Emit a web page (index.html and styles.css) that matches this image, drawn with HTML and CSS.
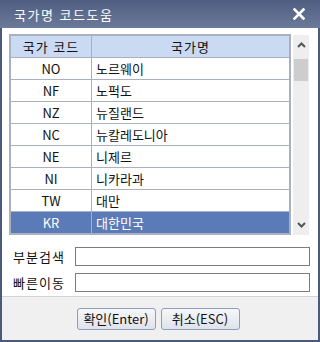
FILE: index.html
```html
<!DOCTYPE html>
<html lang="ko">
<head>
    <meta charset="UTF-8">
    <title>국가명 코드도움</title>
    <link rel="stylesheet" href="styles.css">
</head>
<body>
    <div class="dialog">
        <div class="titlebar">
            <span class="title">국가명 코드도움</span>
            <svg class="close" width="12" height="12" viewBox="0 0 12 12">
                <path d="M1.5 1.5 L10.5 10.5 M10.5 1.5 L1.5 10.5" stroke="#fff" stroke-width="2.6" stroke-linecap="square"/>
            </svg>
        </div>

        <div class="content">
            <div class="list">
                <table>
                    <tr>
                        <th class="col-code">국가 코드</th>
                        <th>국가명</th>
                    </tr>
                    <tr><td class="col-code">NO</td><td>노르웨이</td></tr>
                    <tr><td class="col-code">NF</td><td>노퍽도</td></tr>
                    <tr><td class="col-code">NZ</td><td>뉴질랜드</td></tr>
                    <tr><td class="col-code">NC</td><td>뉴칼레도니아</td></tr>
                    <tr><td class="col-code">NE</td><td>니제르</td></tr>
                    <tr><td class="col-code">NI</td><td>니카라과</td></tr>
                    <tr><td class="col-code">TW</td><td>대만</td></tr>
                    <tr class="selected"><td class="col-code">KR</td><td>대한민국</td></tr>
                </table>
                <div class="scrollbar">
                    <svg class="arrow" width="9" height="6" viewBox="0 0 9 6">
                        <path d="M1 5 L4.5 1.5 L8 5" stroke="#555" stroke-width="2" fill="none"/>
                    </svg>
                    <div class="thumb"></div>
                    <div class="spacer"></div>
                    <svg class="arrow" width="9" height="6" viewBox="0 0 9 6">
                        <path d="M1 1 L4.5 4.5 L8 1" stroke="#555" stroke-width="2" fill="none"/>
                    </svg>
                </div>
            </div>

            <div class="field first">
                <label>부분검색</label>
                <input type="text">
            </div>
            <div class="field">
                <label>빠른이동</label>
                <input type="text">
            </div>
        </div>

        <div class="footer">
            <button class="btn">확인(Enter)</button>
            <button class="btn">취소(ESC)</button>
        </div>
    </div>
</body>
</html>
```

FILE: styles.css
```css
body {
    margin: 0;
    padding: 0;
    font-family: "Noto Sans CJK KR", "DejaVu Sans", sans-serif;
    font-size: 12px;
}

.dialog {
    width: 320px;
    height: 342px;
    box-sizing: border-box;
    border: 2px solid #4b5a7c;
    border-top: none;
    display: flex;
    flex-direction: column;
    background: #fff;
}

.titlebar {
    height: 28px;
    margin: 0 -2px;
    padding: 0 15px 0 14px;
    display: flex;
    align-items: center;
    justify-content: space-between;
    background: linear-gradient(#4f5e80, #6b7a9b);
    color: #fff;
}

.title {
    font-size: 13px;
    letter-spacing: 1.5px;
}

.content {
    flex: 1;
    padding: 7px 8px 0 8px;
    border-bottom: 1px solid #d4d4d4;
}

.list {
    display: flex;
    height: 200px;
}

table {
    width: 280px;
    height: 199px;
    border-collapse: collapse;
    border: 1px solid #a9b1c0;
    margin-right: 3px;
    outline: 1px solid #a9b1c0;
    align-self: flex-start;
    font-size: 13px;
}

th, td {
    border: 1px solid #a9b1c0;
    height: 21px;
    padding: 0 4px;
    font-weight: normal;
    color: #111;
    text-align: left;
}

th {
    background-color: #c9daf2;
    text-align: center;
    letter-spacing: 1px;
}

.col-code {
    width: 72px;
    text-align: center;
}

.selected td {
    background-color: #5b7bb8;
    color: #fff;
}

.scrollbar {
    width: 16px;
    background-color: #eeeeee;
    display: flex;
    flex-direction: column;
    align-items: center;
}

.arrow {
    margin: 7px 0;
}

.thumb {
    width: 14px;
    height: 22px;
    background-color: #cdcdcd;
    margin-top: 4px;
}

.spacer {
    flex: 1;
}

.field {
    display: flex;
    align-items: center;
    margin-top: 7px;
}

.field.first {
    margin-top: 12px;
}

.field label {
    width: 62px;
    padding-left: 3px;
    color: #111;
    font-size: 13px;
    letter-spacing: 1px;
}

.field input {
    width: 235px;
    height: 19px;
    box-sizing: border-box;
    border: 1px solid #7c7c7c;
    margin: 0;
}

.footer {
    height: 43px;
    background-color: #f0f0f0;
    display: flex;
    justify-content: center;
    align-items: center;
    gap: 5px;
    padding-right: 4px;
}

.btn {
    font-family: "Noto Sans CJK KR", "DejaVu Sans", sans-serif;
    font-size: 13px;
    height: 22px;
    width: 79px;
    padding: 0;
    border: 1px solid #8d9dbb;
    border-radius: 3px;
    background: linear-gradient(#f6f7fa, #dfe3ea);
    color: #111;
}
```
